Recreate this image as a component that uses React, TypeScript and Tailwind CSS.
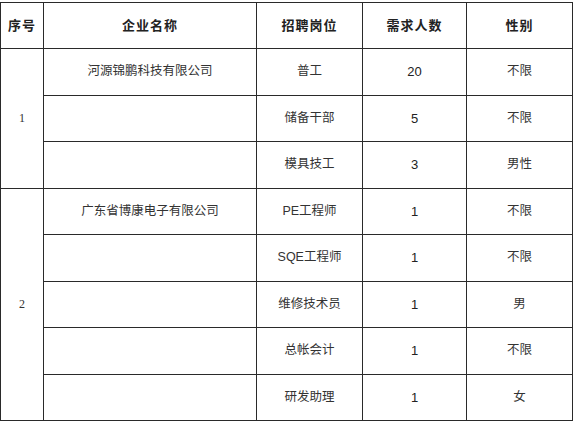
export default function App() {
  const groups = [
    {
      no: "1",
      rows: [
        { company: "河源锦鹏科技有限公司", job: "普工", count: "20", gender: "不限" },
        { company: "", job: "储备干部", count: "5", gender: "不限" },
        { company: "", job: "模具技工", count: "3", gender: "男性" },
      ],
    },
    {
      no: "2",
      rows: [
        { company: "广东省博康电子有限公司", job: "PE工程师", count: "1", gender: "不限" },
        { company: "", job: "SQE工程师", count: "1", gender: "不限" },
        { company: "", job: "维修技术员", count: "1", gender: "男" },
        { company: "", job: "总帐会计", count: "1", gender: "不限" },
        { company: "", job: "研发助理", count: "1", gender: "女" },
      ],
    },
  ]

  const cell = "border border-[#2a2a2a] text-center align-middle p-0"
  const head = "border border-[#2a2a2a] text-center align-middle p-0 font-bold text-[13px] text-[#222] tracking-[1px]"

  return (
    <div
      className="w-[574px] h-[421px] bg-white pt-[2px] text-[12.5px] text-[#333]"
      style={{ fontFamily: '"Liberation Sans", "Noto Sans CJK SC", sans-serif' }}
    >
      <table className="table-fixed border-collapse w-[572px]">
        <colgroup>
          <col className="w-[43px]" />
          <col className="w-[213px]" />
          <col className="w-[106px]" />
          <col className="w-[104px]" />
          <col className="w-[106px]" />
        </colgroup>
        <thead>
          <tr className="h-[46px]">
            <th className={head} style={{ fontFamily: '"Liberation Serif", "Noto Sans CJK SC", serif' }}>序号</th>
            <th className={head} style={{ fontFamily: '"Liberation Serif", "Noto Sans CJK SC", serif' }}>企业名称</th>
            <th className={head} style={{ fontFamily: '"Liberation Serif", "Noto Sans CJK SC", serif' }}>招聘岗位</th>
            <th className={head} style={{ fontFamily: '"Liberation Serif", "Noto Sans CJK SC", serif' }}>需求人数</th>
            <th className={head} style={{ fontFamily: '"Liberation Serif", "Noto Sans CJK SC", serif' }}>性别</th>
          </tr>
        </thead>
        <tbody>
          {groups.map((g) =>
            g.rows.map((r, i) => (
              <tr key={g.no + "-" + i} className="h-[46.5px]">
                {i === 0 && (
                  <td
                    rowSpan={g.rows.length}
                    className={cell + " text-[12px] font-['Liberation_Serif',serif]"}
                  >
                    {g.no}
                  </td>
                )}
                <td className={cell}>{r.company}</td>
                <td className={cell}>{r.job}</td>
                <td className={cell + " text-[13px] text-[#222]"}>{r.count}</td>
                <td className={cell}>{r.gender}</td>
              </tr>
            ))
          )}
        </tbody>
      </table>
    </div>
  )
}
